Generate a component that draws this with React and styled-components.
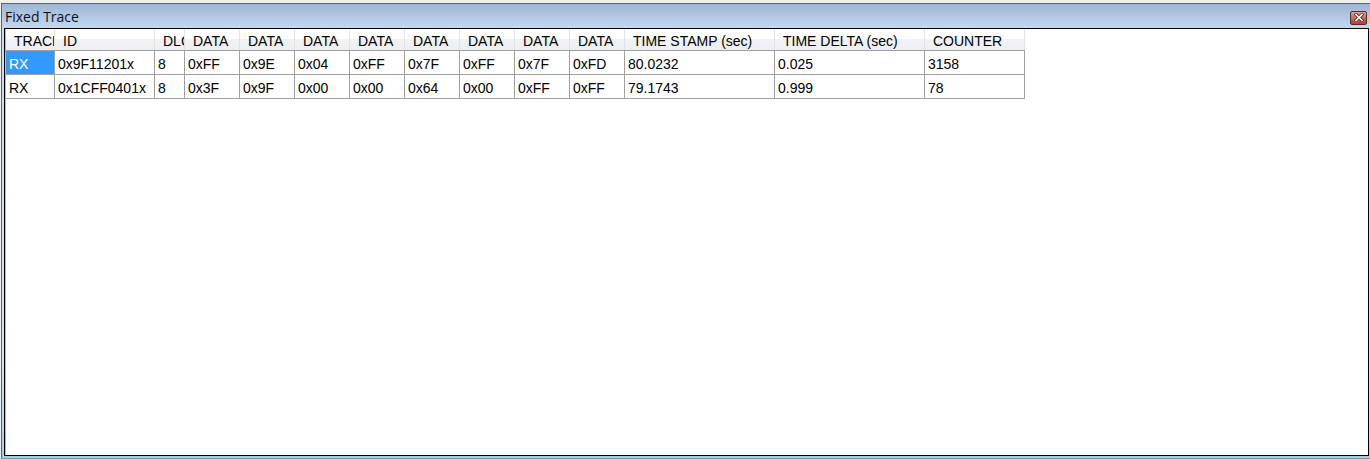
import React from "react";
import styled, { createGlobalStyle } from "styled-components";

const columns = [
  { title: "TRACE", width: 49 },
  { title: "ID", width: 100 },
  { title: "DLC", width: 30 },
  { title: "DATA", width: 55 },
  { title: "DATA", width: 55 },
  { title: "DATA", width: 55 },
  { title: "DATA", width: 55 },
  { title: "DATA", width: 55 },
  { title: "DATA", width: 55 },
  { title: "DATA", width: 55 },
  { title: "DATA", width: 55 },
  { title: "TIME STAMP (sec)", width: 150 },
  { title: "TIME DELTA (sec)", width: 150 },
  { title: "COUNTER", width: 100 },
];

const rows = [
  ["RX", "0x9F11201x", "8", "0xFF", "0x9E", "0x04", "0xFF", "0x7F", "0xFF", "0x7F", "0xFD", "80.0232", "0.025", "3158"],
  ["RX", "0x1CFF0401x", "8", "0x3F", "0x9F", "0x00", "0x00", "0x64", "0x00", "0xFF", "0xFF", "79.1743", "0.999", "78"],
];

const gridColumns = columns.map((c) => `${c.width}px`).join(" ");

export default function App() {
  return (
    <>
      <GlobalStyle />
      <Window>
        <TitleBar>
          <Title>Fixed Trace</Title>
          <CloseButton aria-label="Close">
            <svg width="10" height="9" viewBox="0 0 10 9">
              <path
                d="M2 1.5 L8 7.5 M8 1.5 L2 7.5"
                stroke="#5a2620"
                strokeWidth="3.2"
                strokeLinecap="square"
              />
              <path
                d="M2 1.5 L8 7.5 M8 1.5 L2 7.5"
                stroke="#ffffff"
                strokeWidth="1.6"
                strokeLinecap="square"
              />
            </svg>
          </CloseButton>
        </TitleBar>
        <Panel>
          <Table>
            <HeaderRow>
              {columns.map((c, i) => (
                <HeaderCell key={i}>{c.title}</HeaderCell>
              ))}
            </HeaderRow>
            {rows.map((row, r) => (
              <Row key={r}>
                {row.map((value, i) => (
                  <Cell key={i} $selected={r === 0 && i === 0}>
                    {value}
                  </Cell>
                ))}
              </Row>
            ))}
          </Table>
        </Panel>
      </Window>
    </>
  );
}

const GlobalStyle = createGlobalStyle`
  html, body {
    margin: 0;
    padding: 0;
    background: #f0f0f0;
    overflow: hidden;
  }
`;

const Window = styled.div`
  display: flex;
  flex-direction: column;
  height: calc(100vh - 3px);
  margin: 3px 0 0 1px;
  box-sizing: border-box;
  border-top: 1px solid #5b6470;
  border-left: 1px solid #5b6470;
  border-bottom: 1px solid #8a9098;
  background: linear-gradient(to bottom, #c9dbef 0%, #d4e2f0 80%, #9fd0ec 100%);
`;

const TitleBar = styled.div`
  display: flex;
  align-items: center;
  justify-content: space-between;
  height: 24px;
  padding: 0 3px 0 3px;
  background: linear-gradient(to bottom, #9db5d4 0%, #b0c8e4 50%, #c3d8ef 100%);
`;

const Title = styled.span`
  font-family: "Open Sans", "Noto Sans", sans-serif;
  font-size: 14px;
  color: #111;
  padding-top: 1px;
`;

const CloseButton = styled.div`
  display: flex;
  align-items: center;
  justify-content: center;
  width: 17px;
  height: 14px;
  margin-top: 3px;
  box-sizing: border-box;
  border: 1px solid #5c2a26;
  border-radius: 2px;
  background: linear-gradient(to bottom, #e4a394 0%, #cf6b5c 50%, #b8402f 100%);
`;

const Panel = styled.div`
  flex: 1;
  margin: 0 1px 2px 2px;
  border: 1px solid #000;
  box-shadow: inset 1px 0 0 #b8b8b8;
  padding-left: 1px;
  background: #fff;
  overflow: hidden;
`;

const Table = styled.div`
  display: flex;
  flex-direction: column;
  width: max-content;
  font-family: "Liberation Sans", Arial, sans-serif;
  font-size: 14px;
  color: #000;
`;

const HeaderRow = styled.div`
  display: grid;
  grid-template-columns: ${gridColumns};
  height: 22px;
  box-sizing: border-box;
  border-bottom: 1px solid #a0a0a0;
  background: linear-gradient(to bottom, #ffffff 0%, #ffffff 45%, #f1f2f4 50%, #eceef1 100%);
`;

const HeaderCell = styled.div`
  display: flex;
  align-items: center;
  padding: 3px 0 0 8px;
  box-sizing: border-box;
  border-right: 1px solid #e2e3e6;
  white-space: nowrap;
  overflow: hidden;
`;

const Row = styled.div`
  display: grid;
  grid-template-columns: ${gridColumns};
  height: 24px;
  box-sizing: border-box;
  border-bottom: 1px solid #a0a0a0;
`;

const Cell = styled.div`
  display: flex;
  align-items: center;
  padding: 3px 0 0 3px;
  box-sizing: border-box;
  border-right: 1px solid #a0a0a0;
  white-space: nowrap;
  overflow: hidden;
  background: ${(p) => (p.$selected ? "#3399ff" : "transparent")};
  color: ${(p) => (p.$selected ? "#fff" : "#000")};
`;
